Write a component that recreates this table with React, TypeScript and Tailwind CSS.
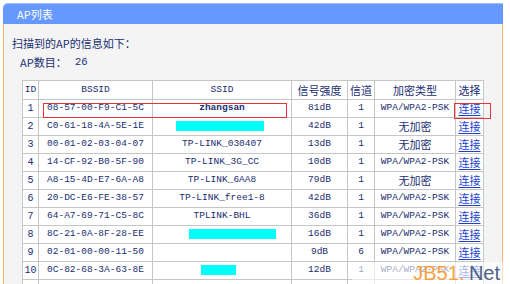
import React from "react";

type Row = {
  id: number;
  bssid: string;
  ssid?: string;
  mask?: { w: number; shift: number };
  signal: string;
  channel: string;
  enc: string;
};

const rows: Row[] = [
  { id: 1, bssid: "08-57-00-F9-C1-5C", ssid: "zhangsan", signal: "81dB", channel: "1", enc: "WPA/WPA2-PSK" },
  { id: 2, bssid: "C0-61-18-4A-5E-1E", mask: { w: 88, shift: -2 }, signal: "42dB", channel: "1", enc: "无加密" },
  { id: 3, bssid: "00-01-02-03-04-07", ssid: "TP-LINK_030407", signal: "13dB", channel: "1", enc: "无加密" },
  { id: 4, bssid: "14-CF-92-B0-5F-90", ssid: "TP-LINK_3G_CC", signal: "10dB", channel: "1", enc: "WPA/WPA2-PSK" },
  { id: 5, bssid: "A8-15-4D-E7-6A-A8", ssid: "TP-LINK_6AA8", signal: "79dB", channel: "1", enc: "无加密" },
  { id: 6, bssid: "20-DC-E6-FE-38-57", ssid: "TP-LINK_free1-8", signal: "42dB", channel: "1", enc: "WPA/WPA2-PSK" },
  { id: 7, bssid: "64-A7-69-71-C5-8C", ssid: "TPLINK-BHL", signal: "36dB", channel: "1", enc: "WPA/WPA2-PSK" },
  { id: 8, bssid: "8C-21-0A-8F-28-EE", mask: { w: 87, shift: 10 }, signal: "16dB", channel: "1", enc: "WPA/WPA2-PSK" },
  { id: 9, bssid: "02-01-00-00-11-50", ssid: "", signal: "9dB", channel: "6", enc: "WPA/WPA2-PSK" },
  { id: 10, bssid: "0C-82-68-3A-63-8E", mask: { w: 35, shift: -4 }, signal: "12dB", channel: "1", enc: "WPA/WPA2-PSK" },
];

const mono = "font-['Liberation_Mono','Noto_Sans_CJK_SC',monospace] text-[9.5px]";
const cjk = "font-['Noto_Sans_CJK_SC',sans-serif] text-[11px]";
const cell = "border border-[#c6c6c6] bg-white text-center p-0 whitespace-nowrap";

export default function App() {
  return (
    <div className="relative w-[510px] h-[284px] overflow-hidden bg-white pl-[3px] pt-[3px] text-[#1a2e72]">
      <div className="w-[500px]">
        <div className="h-[21px] bg-[#6699ff] border-t border-[#9dbcff] rounded-tl-[5px] flex items-center pl-[14px]">
          <span className={`${cjk} text-white leading-none`}>AP列表</span>
        </div>
        <div className="h-[270px] bg-[#f4f4f4] border-x border-[#f9b56a] pl-[8px] pt-[12px]">
          <div className={`${cjk} leading-[14px]`}>扫描到的AP的信息如下：</div>
          <div className={`${cjk} leading-[14px] mt-[5px] pl-[8px] flex items-center`}>
            <span className="w-[55px]">AP数目：</span>
            <span className={`${mono} text-[10.5px]`}>26</span>
          </div>
          <table className="mt-[11px] ml-[10px] table-fixed border-collapse border border-[#9a9a9a]">
            <colgroup>
              <col className="w-[16px]" />
              <col className="w-[114px]" />
              <col className="w-[139px]" />
              <col className="w-[56px]" />
              <col className="w-[27px]" />
              <col className="w-[81px]" />
              <col className="w-[28px]" />
            </colgroup>
            <thead>
              <tr className="h-[19px]">
                <th className={`${cell} ${mono} font-normal`}>ID</th>
                <th className={`${cell} ${mono} font-normal`}>BSSID</th>
                <th className={`${cell} ${mono} font-normal`}>SSID</th>
                <th className={`${cell} ${cjk} font-normal`}>信号强度</th>
                <th className={`${cell} ${cjk} font-normal`}>信道</th>
                <th className={`${cell} ${cjk} font-normal`}>加密类型</th>
                <th className={`${cell} ${cjk} font-normal`}>选择</th>
              </tr>
            </thead>
            <tbody>
              {rows.map((r) => (
                <tr key={r.id} className="h-[18px]">
                  <td className={`${cell} ${mono} text-[10px]`}>{r.id}</td>
                  <td className={`${cell} ${mono}`}>{r.bssid}</td>
                  <td className={`${cell} ${mono}`}>
                    {r.mask ? (
                      <span
                        className="inline-block h-[10px] bg-[#00ffff] align-middle"
                        style={{ width: r.mask.w, marginLeft: r.mask.shift * 2 }}
                      />
                    ) : (
                      <span className={r.id === 1 ? "font-bold" : ""}>{r.ssid}</span>
                    )}
                  </td>
                  <td className={`${cell} ${mono}`}>{r.signal}</td>
                  <td className={`${cell} ${mono}`}>{r.channel}</td>
                  <td className={`${cell} ${r.enc === "无加密" ? cjk : mono}`}>{r.enc}</td>
                  <td className={`${cell} ${cjk}`}>
                    <a className="text-[#1a3fd0] underline underline-offset-2">连接</a>
                  </td>
                </tr>
              ))}
              {/* next row, only its top edge shows */}
              <tr className="h-[18px]">
                <td className={cell} />
                <td className={cell} />
                <td className={cell} />
                <td className={cell} />
                <td className={cell} />
                <td className={cell} />
                <td className={cell} />
              </tr>
            </tbody>
          </table>
        </div>
      </div>

      {/* highlight boxes */}
      <div className="absolute left-[43px] top-[103px] w-[244px] h-[15px] border border-[#e8333a]" />
      <div className="absolute left-[454px] top-[103px] w-[37px] h-[16px] border border-[#e8333a]" />

      {/* watermark */}
      <div className="absolute left-[352px] top-[262px] w-[158px] h-[22px] bg-white/60 flex items-center justify-end pr-[10px]">
        <span className="font-['Liberation_Sans',sans-serif] text-[20px] leading-none text-[#f7a13e]">JB51</span>
        <span className="font-['Liberation_Sans',sans-serif] text-[20px] leading-none text-[#f7a13e] w-[10px]">.</span>
        <span className="font-['Liberation_Sans',sans-serif] text-[20px] leading-none text-[#4f6186]">Net</span>
      </div>
    </div>
  );
}
